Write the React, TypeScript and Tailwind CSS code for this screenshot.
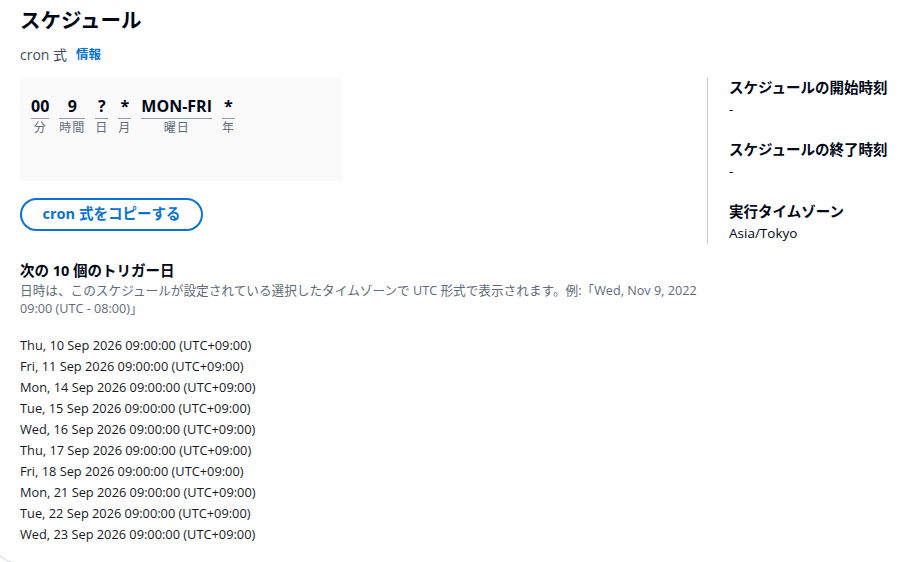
import React from "react";

const FONT = { fontFamily: '"Open Sans", "Noto Sans CJK JP", sans-serif' };

const fields = [
  { value: "00", label: "分" },
  { value: "9", label: "時間" },
  { value: "?", label: "日" },
  { value: "*", label: "月" },
  { value: "MON-FRI", label: "曜日" },
  { value: "*", label: "年" },
];

const triggers = [
  "Thu, 10 Sep 2026 09:00:00 (UTC+09:00)",
  "Fri, 11 Sep 2026 09:00:00 (UTC+09:00)",
  "Mon, 14 Sep 2026 09:00:00 (UTC+09:00)",
  "Tue, 15 Sep 2026 09:00:00 (UTC+09:00)",
  "Wed, 16 Sep 2026 09:00:00 (UTC+09:00)",
  "Thu, 17 Sep 2026 09:00:00 (UTC+09:00)",
  "Fri, 18 Sep 2026 09:00:00 (UTC+09:00)",
  "Mon, 21 Sep 2026 09:00:00 (UTC+09:00)",
  "Tue, 22 Sep 2026 09:00:00 (UTC+09:00)",
  "Wed, 23 Sep 2026 09:00:00 (UTC+09:00)",
];

function CronField({ value, label }: { value: string; label: string }) {
  return (
    <div className="flex flex-col items-stretch">
      <span className="text-[16px] font-bold leading-[19px] text-[#000716] text-center">
        {value}
      </span>
      <span className="h-px bg-[#8d99a8] mt-[2px]" />
      <span className="text-[12px] leading-[17px] text-[#5f6b7a] text-center tracking-[1px]">
        {label}
      </span>
    </div>
  );
}

function KeyValue({ k, v }: { k: string; v: string }) {
  return (
    <div className="flex flex-col">
      <span className="text-[14.5px] font-bold leading-[20px] text-[#000716]">{k}</span>
      <span className="text-[13.5px] leading-[20px] text-[#000716] mt-[1px]">{v}</span>
    </div>
  );
}

export default function App() {
  return (
    <div className="w-[902px] h-[562px] overflow-hidden bg-white" style={FONT}>
      <div className="-ml-[6px] w-[920px] h-[563px] rounded-bl-[22px] border-l border-b border-[#d5d9de] pl-[25px] pt-[5px]">
        <h1 className="text-[20.5px] font-bold leading-[30px] text-[#000716]">スケジュール</h1>

        <div className="flex">
          {/* Left column */}
          <div className="w-[687px] flex flex-col">
            <div className="flex items-center gap-[9px] leading-[20px] mt-[10px]">
              <span className="text-[#414d5c] text-[14px]">cron 式</span>
              <span className="text-[#0972d3] font-bold text-[12.5px]">情報</span>
            </div>

            <div className="mt-[13px] w-[322px] h-[103px] bg-[#fafafa] pl-[11px] pt-[19px]">
              <div className="flex gap-[10px]">
                {fields.map((f, i) => (
                  <CronField key={i} value={f.value} label={f.label} />
                ))}
              </div>
            </div>

            <button className="mt-[17px] w-[183px] h-[33px] rounded-full border-2 border-[#0972d3] text-[#0972d3] text-[14.5px] font-bold leading-none">
              cron 式をコピーする
            </button>

            <div className="mt-[30px] text-[14.5px] font-bold leading-[20px] text-[#000716]">
              次の 10 個のトリガー日
            </div>
            <p className="text-[12.65px] leading-[18px] text-[#5f6b7a]">
              日時は、このスケジュールが設定されている選択したタイムゾーンで UTC 形式で表示されます。例:「Wed, Nov 9, 2022 09:00 (UTC - 08:00)」
            </p>

            <ul className="mt-[18px] flex flex-col">
              {triggers.map((t) => (
                <li key={t} className="text-[12.8px] leading-[21px] text-[#16191f]">
                  {t}
                </li>
              ))}
            </ul>
          </div>

          {/* Right column */}
          <div className="border-l border-[#c6c6cd] pl-[21px] h-[166px] mt-[43px] flex flex-col gap-[21px]">
            <KeyValue k="スケジュールの開始時刻" v="-" />
            <KeyValue k="スケジュールの終了時刻" v="-" />
            <KeyValue k="実行タイムゾーン" v="Asia/Tokyo" />
          </div>
        </div>
      </div>
    </div>
  );
}
